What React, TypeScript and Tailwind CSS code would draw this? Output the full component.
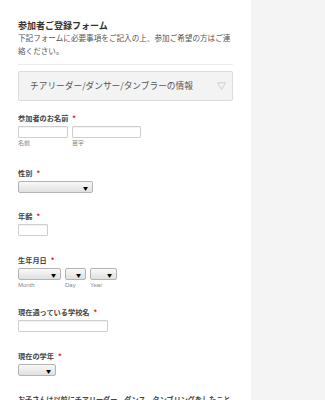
import React from 'react';

const font = { fontFamily: '"Noto Sans CJK JP", "Noto Sans", sans-serif' };

const Req = () => <span className="ml-[4px] text-[#e30000]">*</span>;

const Label = ({ text }: { text: string }) => (
  <div className="text-[7.2px] leading-[10px] font-bold text-[#444]">
    {text}
    <Req />
  </div>
);

const TextBox = ({ w }: { w: string }) => (
  <div className={`${w} h-[12px] border border-[#cfcfcf] bg-white rounded-[1px] shadow-[inset_0_1px_1px_rgba(0,0,0,0.06)]`} />
);

const SelectBox = ({ w }: { w: string }) => (
  <div
    className={`${w} h-[12px] border border-[#b3b3b3] rounded-[2px] bg-gradient-to-b from-[#f8f8f8] to-[#e0e0e0] flex items-center justify-end pr-[4px]`}
  >
    <span className="text-[5px] leading-none text-black">▼</span>
  </div>
);

const Sub = ({ text, w }: { text: string; w: string }) => (
  <div className={`${w} text-[6px] leading-[8px] text-[#888] font-['Liberation_Sans','Noto_Sans_CJK_JP',sans-serif]`}>
    {text}
  </div>
);

export default function App() {
  return (
    <div className="flex w-[325px] h-[400px] overflow-hidden bg-white" style={font}>
      <div className="w-[251px] shrink-0 bg-white px-[18px] pt-[22px]">
        <div className="text-[9px] leading-[8px] font-bold text-[#333]">参加者ご登録フォーム</div>
        <p className="mt-[1px] text-[7.6px] leading-[13px] text-[#555]">
          下記フォームに必要事項をご記入の上、参加ご希望の方はご連絡ください。
        </p>

        <div className="mt-[7px] h-px bg-[#ececec]" />

        <div className="mt-[6px] h-[30px] border border-[#dcdcdc] rounded-[2px] bg-[#f3f3f3] flex items-center justify-between pl-[11px] pr-[6px]">
          <span className="text-[8.7px] text-[#555]">チアリーダー/ダンサー/タンブラーの情報</span>
          <svg width="9" height="8" viewBox="0 0 9 8">
            <path d="M0.5 0.8 L8.5 0.8 L4.5 7.5 Z" fill="none" stroke="#c8c8c8" strokeWidth="0.8" />
          </svg>
        </div>

        <div className="mt-[12px]">
          <Label text="参加者のお名前" />
          <div className="mt-[3px] flex gap-[4px]">
            <TextBox w="w-[50px]" />
            <TextBox w="w-[69px]" />
          </div>
          <div className="mt-[1px] flex gap-[4px]">
            <Sub text="名前" w="w-[50px]" />
            <Sub text="苗字" w="w-[69px]" />
          </div>
        </div>

        <div className="mt-[21px]">
          <Label text="性別" />
          <div className="mt-[3px]">
            <SelectBox w="w-[75px]" />
          </div>
        </div>

        <div className="mt-[18px]">
          <Label text="年齢" />
          <div className="mt-[3px]">
            <TextBox w="w-[30px]" />
          </div>
        </div>

        <div className="mt-[19px]">
          <Label text="生年月日" />
          <div className="mt-[3px] flex gap-[4px]">
            <SelectBox w="w-[43px]" />
            <SelectBox w="w-[21px]" />
            <SelectBox w="w-[27px]" />
          </div>
          <div className="mt-[1px] flex gap-[4px]">
            <Sub text="Month" w="w-[43px]" />
            <Sub text="Day" w="w-[21px]" />
            <Sub text="Year" w="w-[27px]" />
          </div>
        </div>

        <div className="mt-[18px]">
          <Label text="現在通っている学校名" />
          <div className="mt-[3px]">
            <TextBox w="w-[90px]" />
          </div>
        </div>

        <div className="mt-[19px]">
          <Label text="現在の学年" />
          <div className="mt-[3px]">
            <SelectBox w="w-[38px]" />
          </div>
        </div>

        <div className="mt-[18px] text-[7.1px] leading-[10px] font-bold text-[#444] whitespace-nowrap">
          お子さんは以前にチアリーダー、ダンス、タンブリングをしたこと
        </div>
      </div>
      <div className="flex-1 bg-[#f4f4f4]" />
    </div>
  );
}
